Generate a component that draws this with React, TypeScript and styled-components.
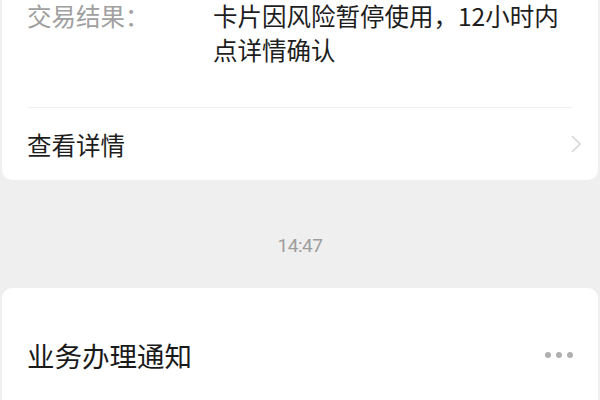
import styled, { createGlobalStyle } from "styled-components";

const GlobalStyle = createGlobalStyle`
  html, body {
    margin: 0;
    padding: 0;
    background: #efefef;
  }
  body {
    font-family: "Noto Sans CJK SC", "Noto Sans", sans-serif;
  }
`;

const Page = styled.div`
  width: 600px;
  height: 400px;
  overflow: hidden;
  background: #efefef;
  padding: 0 2px;
  box-sizing: border-box;
`;

const Card = styled.div<{ $top?: boolean }>`
  background: #ffffff;
  border-radius: ${(p) => (p.$top ? "0 0 10px 10px" : "10px 10px 0 0")};
  padding: 0 25px;
  min-height: ${(p) => (p.$top ? "0" : "160px")};
`;

const InfoRow = styled.div`
  display: flex;
  margin-top: -1px;
  padding-bottom: 40px;
  border-bottom: 1px solid #f0f0f0;
`;

const Label = styled.div`
  width: 186px;
  flex-shrink: 0;
  font-size: 24.5px;
  line-height: 34px;
  color: #a0a0a0;
  white-space: nowrap;
`;

const Value = styled.div`
  font-size: 24.5px;
  line-height: 34px;
  color: #1e1e1e;
  white-space: nowrap;
`;

const LinkRow = styled.div`
  display: flex;
  align-items: center;
  justify-content: space-between;
  height: 72px;
  font-size: 24.5px;
  color: #1e1e1e;
`;

const Chevron = styled.svg`
  width: 14px;
  height: 22px;
  margin-right: -10px;
`;

const Time = styled.div`
  height: 108px;
  display: flex;
  align-items: center;
  justify-content: center;
  font-family: "Roboto", "Noto Sans", sans-serif;
  font-size: 19px;
  color: #9d9d9d;
  letter-spacing: -0.5px;
  padding-top: 22px;
  box-sizing: border-box;
`;

const TitleRow = styled.div`
  display: flex;
  align-items: center;
  justify-content: space-between;
  padding-top: 50px;
  height: 34px;
`;

const Title = styled.div`
  font-size: 27.5px;
  color: #1a1a1a;
`;

const Dots = styled.div`
  display: flex;
  gap: 5px;
`;

const Dot = styled.span`
  width: 6px;
  height: 6px;
  border-radius: 50%;
  background: #b0b0b0;
`;

export default function App() {
  return (
    <Page>
      <GlobalStyle />
      <Card $top>
        <InfoRow>
          <Label>交易结果：</Label>
          <Value>
            卡片因风险暂停使用，12小时内
            <br />
            点详情确认
          </Value>
        </InfoRow>
        <LinkRow>
          <span>查看详情</span>
          <Chevron viewBox="0 0 14 22">
            <path d="M3 3 L11 11 L3 19" fill="none" stroke="#d6d6d6" strokeWidth="1.6" />
          </Chevron>
        </LinkRow>
      </Card>
      <Time>14:47</Time>
      <Card>
        <TitleRow>
          <Title>业务办理通知</Title>
          <Dots>
            <Dot />
            <Dot />
            <Dot />
          </Dots>
        </TitleRow>
      </Card>
    </Page>
  );
}
